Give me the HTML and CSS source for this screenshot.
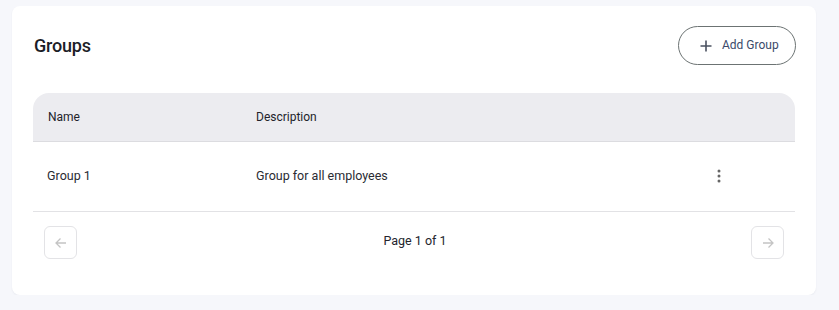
FILE: index.html
```html
<!DOCTYPE html>
<html lang="en">
<head>
<meta charset="utf-8">
<title>Groups</title>
<link rel="stylesheet" href="styles.css">
</head>
<body>
<div class="page">
  <section class="card">
    <header class="card-head">
      <h1 class="title">Groups</h1>
      <button class="add-btn" type="button">
        <svg class="plus" width="12" height="12" viewBox="0 0 12 12"><path d="M6 0.5V11.5M0.5 6H11.5" stroke="#4a5160" stroke-width="1.6" fill="none"/></svg>
        <span>Add Group</span>
      </button>
    </header>
    <div class="table">
      <div class="thead">
        <div class="cell">Name</div>
        <div class="cell">Description</div>
        <div class="cell"></div>
      </div>
      <div class="trow">
        <div class="cell">Group 1</div>
        <div class="cell">Group for all employees</div>
        <div class="cell actions">
          <svg width="24" height="24" viewBox="0 0 24 24"><circle cx="12" cy="7" r="1.5" fill="#666"/><circle cx="12" cy="12" r="1.5" fill="#666"/><circle cx="12" cy="17" r="1.5" fill="#666"/></svg>
        </div>
      </div>
    </div>
    <div class="pager">
      <button class="pg-btn" type="button" aria-label="Previous">
        <svg width="14" height="14" viewBox="0 0 14 14"><path d="M12 7H2M6.5 2.5L2 7l4.5 4.5" stroke="#c4c4c4" stroke-width="1.3" fill="none"/></svg>
      </button>
      <span class="pg-text">Page 1 of 1</span>
      <button class="pg-btn" type="button" aria-label="Next">
        <svg width="14" height="14" viewBox="0 0 14 14"><path d="M2 7h10M7.5 2.5L12 7l-4.5 4.5" stroke="#c4c4c4" stroke-width="1.3" fill="none"/></svg>
      </button>
    </div>
  </section>
</div>
</body>
</html>
```

FILE: styles.css
```css
* { box-sizing: border-box; }
html, body { margin: 0; padding: 0; }
body {
  background: #f6f7fb;
  font-family: Roboto, "Liberation Sans", Arial, sans-serif;
  color: #1d1d26;
}
.page { padding: 6px 23px 0 12px; }
.card {
  background: #fff;
  border-radius: 8px;
  box-shadow: 0 1px 2px rgba(20, 30, 60, 0.06);
  padding: 20px 21px 35px 21px;
  height: 289px;
}
.card-head {
  display: flex;
  align-items: center;
  justify-content: space-between;
  height: 39px;
  padding-left: 1px;
  padding-right: 0;
}
.title {
  margin: 0;
  font-size: 18px;
  font-weight: 500;
  color: #1c1d27;
  letter-spacing: -0.2px;
}
.add-btn {
  display: flex;
  align-items: center;
  gap: 10px;
  height: 39px;
  width: 118px;
  margin-right: -1px;
  padding: 0 0 0 21px;
  border: 1px solid #6c7373;
  border-radius: 20px;
  background: #fff;
  font-family: inherit;
  font-size: 12px;
  color: #3b4a6a;
}
.add-btn span { margin-top: -1px; }
.table { margin-top: 28px; }
.thead, .trow {
  display: grid;
  grid-template-columns: 208px 1fr 100px;
  align-items: center;
}
.thead {
  height: 49px;
  background: #ececf0;
  border-radius: 16px 16px 0 0;
  border-bottom: 1px solid #dcdce0;
  font-size: 12px;
  color: #22232b;
}
.thead .cell { padding-left: 15px; }
.trow {
  height: 70px;
  border-bottom: 1px solid #e2e2e5;
  font-size: 12.5px;
  color: #2a2b33;
}
.trow .cell { padding-left: 14px; margin-top: -2px; }
.trow .cell:nth-child(2) { padding-left: 15px; }
.trow .actions { padding-left: 12px; display: flex; margin-top: -2px; }
.pager {
  display: flex;
  align-items: center;
  justify-content: space-between;
  padding: 14px 11px 0 11px;
}
.pg-btn {
  width: 33px;
  height: 33px;
  border: 1px solid #e3e3e6;
  border-radius: 6px;
  background: #fff;
  display: flex;
  align-items: center;
  justify-content: center;
  padding: 0;
}
.pg-text {
  font-size: 12.5px;
  color: #24252d;
  margin-top: -5px;
  margin-left: 2px;
}
```
